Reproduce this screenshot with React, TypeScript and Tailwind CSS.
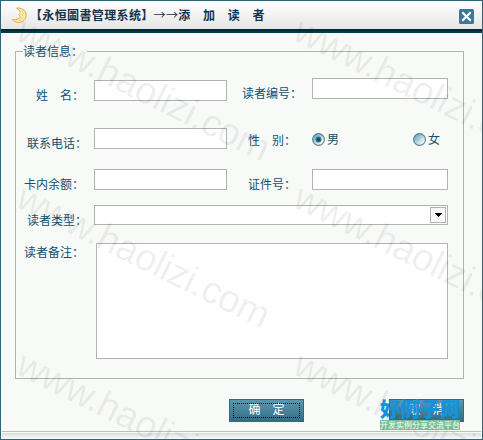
import React from 'react';

const Label = ({ children, className = '' }: any) => (
  <span className={`block shrink-0 whitespace-pre leading-[14px] ${className}`}>{children}</span>
);

const TextBox = ({ className = '', label }: any) => (
  <input
    type="text"
    aria-label={label}
    className={`block shrink-0 h-[21px] bg-white border border-[#b2b2b2] px-1 outline-none ${className}`}
  />
);

const Radio = ({ checked, id }: any) => (
  <svg width="14" height="14" viewBox="0 0 14 14" className="shrink-0">
    <defs>
      <linearGradient id={id} x1="0" y1="0" x2="1" y2="1">
        <stop offset="0.15" stopColor="#69a9bd" />
        <stop offset="0.85" stopColor="#ffffff" />
      </linearGradient>
    </defs>
    <circle cx="6.5" cy="6.5" r="5.9" fill={`url(#${id})`} stroke="#5d8290" strokeWidth="1.1" />
    {checked && <circle cx="6.5" cy="6.5" r="2.9" fill="#2c6f88" />}
    {checked && <circle cx="6.5" cy="6.5" r="1.3" fill="#123f55" />}
  </svg>
);

const MoonIcon = () => (
  <svg width="17" height="17" viewBox="0 0 17 17" className="shrink-0">
    <path
      d="M5.5 1.2C10 .3 14.8 3 15.2 7.7 15.6 12.5 11.7 15.8 7.2 15.5 4.4 15.3 2.3 14 1.2 12.3 4.5 13.4 8.2 12.7 9 10 9.4 8.8 7.7 8.8 8 7.4 8.3 6.2 9.4 6.4 9.2 5.3 8.9 3.4 7.3 2 5.5 1.2Z"
      fill="#fce9a9"
      stroke="#e2ad4c"
      strokeWidth="1"
    />
    <path d="M10.5 3.5l1 1M12.5 6l.5 1M10.6 8l1.2.2M12 10.5l-1 1M8.5 13.4l1.5-.6" stroke="#efb95e" strokeWidth="1" />
    <path d="M10 5.3l1 1M13 9v1" stroke="#fffbe8" strokeWidth="1.2" />
  </svg>
);

const CloseIcon = () => (
  <svg width="15" height="15" viewBox="0 0 15 15">
    <rect width="15" height="15" rx="1.5" fill="#397a96" />
    <path d="M4 4l7 7M11 4l-7 7" stroke="#fff" strokeWidth="2.2" strokeLinecap="square" />
  </svg>
);

const ActionButton = ({ children, focused }: any) => (
  <button className="relative w-[75px] h-[23px] border border-[#306b83] bg-linear-to-b from-[#5998b0] to-[#336d83] text-white text-[12px] leading-[14px] whitespace-pre pb-px">
    {children}
    {focused && <span className="absolute inset-[3px] border border-dotted border-black" />}
  </button>
);

const marks = [
  [13, 38],
  [290, 38],
  [13, 205],
  [290, 205],
  [13, 372],
  [290, 372],
];

const Watermark = () => (
  <svg className="absolute inset-0 pointer-events-none" width="483" height="440">
    {marks.map(([x, y]) => (
      <text
        key={`${x}-${y}`}
        transform={`translate(${x} ${y}) rotate(26.4)`}
        fontSize="38"
        textLength="277"
        fill="#000"
        fillOpacity="0.075"
        fontFamily="'Liberation Sans', sans-serif"
      >
        www.haolizi.com
      </text>
    ))}
  </svg>
);

export default function App() {
  return (
    <div className="relative flex flex-col w-[483px] h-[440px] overflow-hidden border border-[#2f647d] bg-[#f8faf7] text-[12px] text-[#12506e] font-['Liberation_Sans','Noto_Sans_CJK_SC',sans-serif]">
      {/* Title bar */}
      <div className="flex items-start shrink-0 h-7 pl-[10px] pr-[8px] pt-[6px] bg-linear-to-b from-white to-[#e6e6e6]">
        <MoonIcon />
        <h1 className="flex-1 pl-[2px] leading-[15px] text-[12px] tracking-[0.36px] font-bold whitespace-pre text-[#123249] font-['Noto_Sans_CJK_SC',sans-serif]">
          【永恒圖書管理系统】<span className="font-normal">→→</span>添　加　读　者
        </h1>
        <button className="mt-[2px]" aria-label="关闭">
          <CloseIcon />
        </button>
      </div>
      <div className="shrink-0 h-1 bg-linear-to-b from-[#04212a] to-[#06425a]" />

      {/* Reader form */}
      <div className="relative shrink-0 mt-[18px] ml-[14px] w-[449px] h-[328px] border border-[#b2b2b2] pt-[26px]">
        <span className="absolute left-[7px] -top-[7px] w-[64px] leading-[14px] bg-[#f8faf7]">读者信息：</span>

        <div className="flex items-start h-[50px]">
          <Label className="w-[78px] pl-[20px] pt-[11px]">姓　名：</Label>
          <TextBox className="w-[133px] mt-[2px]" label="姓名" />
          <Label className="w-[85px] pl-[15px] pt-[9px]">读者编号：</Label>
          <TextBox className="w-[136px]" label="读者编号" />
        </div>

        <div className="flex items-start h-[41px]">
          <Label className="w-[78px] pl-[11px] pt-[9px]">联系电话：</Label>
          <TextBox className="w-[133px]" label="联系电话" />
          <Label className="w-[85px] pl-[21px] pt-[6px]">性　别：</Label>
          <div className="flex items-center gap-px mt-[5px] w-[101px] h-[14px] leading-[14px]">
            <Radio checked id="male" />
            <span>男</span>
          </div>
          <div className="flex items-center gap-px mt-[5px] h-[14px] leading-[14px]">
            <Radio id="female" />
            <span>女</span>
          </div>
        </div>

        <div className="flex items-start h-[36px]">
          <Label className="w-[78px] pl-[8px] pt-[9px]">卡内余额：</Label>
          <TextBox className="w-[133px]" label="卡内余额" />
          <Label className="w-[85px] pl-[21px] pt-[9px]">证件号：</Label>
          <TextBox className="w-[136px]" label="证件号" />
        </div>

        <div className="flex items-start h-[38px]">
          <Label className="w-[78px] pl-[11px] pt-[9px]">读者类型：</Label>
          <div className="flex justify-end items-start w-[354px] h-[20px] p-px bg-white border border-[#b2b2b2]">
            <button className="flex items-center justify-center w-[16px] h-[16px] border border-[#b2b2b2] bg-[#f8faf7]" aria-label="展开">
              <svg width="7" height="4" viewBox="0 0 7 4" shapeRendering="crispEdges">
                <path d="M0 0h7L3.5 4z" fill="#000" />
              </svg>
            </button>
          </div>
        </div>

        <div className="flex items-start">
          <Label className="w-[80px] pl-[8px] pt-[3px]">读者备注：</Label>
          <textarea className="block w-[352px] h-[116px] resize-none outline-none bg-white border border-[#b2b2b2]" aria-label="读者备注" />
        </div>
      </div>

      {/* Buttons */}
      <div className="flex shrink-0 mt-[20px] pl-[228px] gap-[85px]">
        <ActionButton focused>确　定</ActionButton>
        <ActionButton>取　消</ActionButton>
      </div>

      {/* Status strip */}
      <div className="shrink-0 mt-[9px] mx-px h-[7px] border-t border-[#bcc0bb]">
        <div className="mt-px h-[5px] bg-linear-to-b from-[#dedede] to-[#f5f5f5]" />
      </div>

      <Watermark />

      {/* Site badge */}
      <div className="absolute left-[379px] top-[397px] w-[80px] pointer-events-none font-['Noto_Sans_CJK_SC',sans-serif]">
        <div className="h-[22px] leading-[22px] text-[20px] font-black text-[#1493dc] whitespace-nowrap">好例子网</div>
        <div className="h-[10px] leading-[10px] text-[8px] text-white bg-[#78bf96] whitespace-nowrap">开发实例分享交流平台</div>
      </div>
    </div>
  );
}
